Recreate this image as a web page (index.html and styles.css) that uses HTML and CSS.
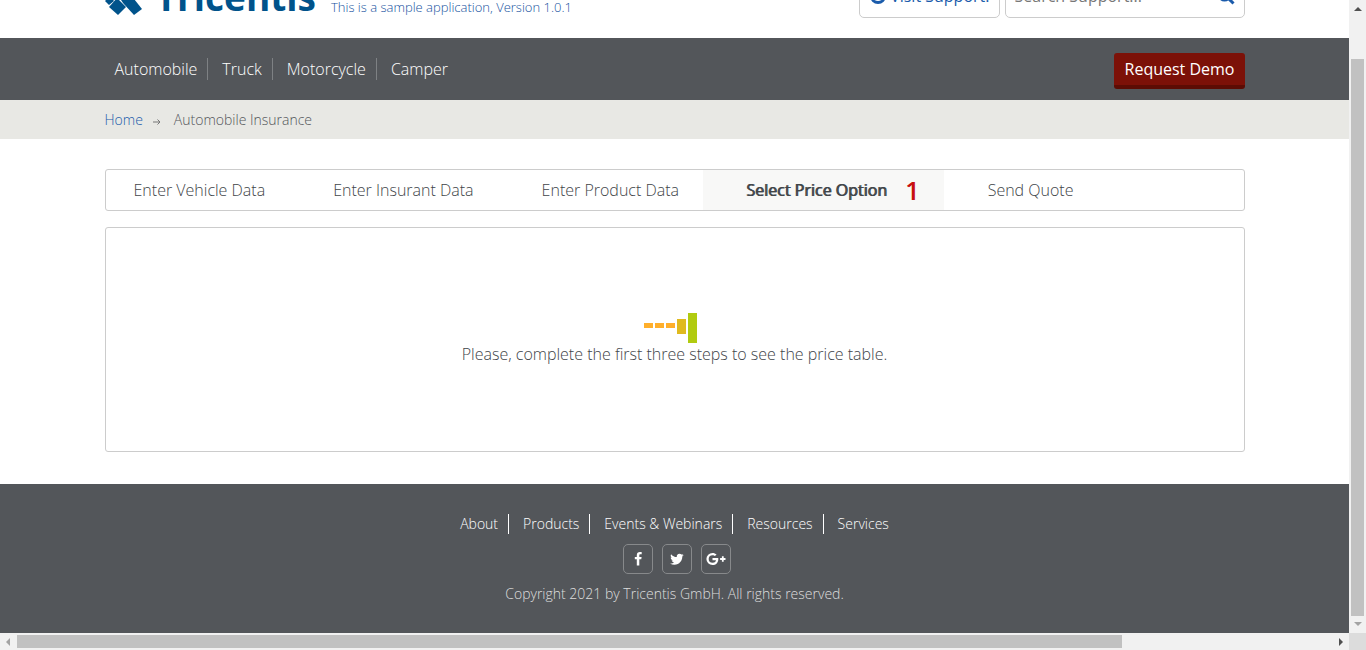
FILE: index.html
```html
<!DOCTYPE html>
<html lang="en">
<head>
<meta charset="utf-8">
<title>Automobile Insurance</title>
<link rel="stylesheet" href="styles.css">
</head>
<body>
<div class="shell">
  <div class="page">
    <header class="header">
      <div class="container header-row">
        <a class="logo" href="#">
          <svg class="logo-mark" viewBox="0 0 37 40" aria-hidden="true">
            <path d="M2 3 10 0 37 34 29 40 18 28Z"/>
            <path d="M29 3 37 9 27 20 19 14Z"/>
            <path d="M13 40 4 32 12 23 21 32Z"/>
            <path d="M0 26 5 21 9 26 4 30Z"/>
          </svg>
          <span class="logo-name">Tricentis</span>
        </a>
        <span class="tagline">This is a sample application, Version 1.0.1</span>
        <div class="header-tools">
          <a class="support" href="#">
            <svg class="support-icon" viewBox="0 0 16 16" aria-hidden="true">
              <circle cx="8" cy="8" r="8"/>
              <circle class="cut" cx="8" cy="5" r="3"/>
              <path class="cut" d="M3 11Q8 8 13 11Q8 15 3 11Z"/>
            </svg>
            Visit Support!
          </a>
          <form class="search">
            <input class="search-input" type="text" aria-label="Search Support" placeholder="Search Support...">
            <button class="search-button" type="button" aria-label="Search">
              <svg viewBox="0 0 18 18" width="18" height="18" aria-hidden="true"><circle cx="7.500" cy="7.500" r="5.500"/><path d="m11.500 11.500 5 5"/></svg>
            </button>
          </form>
        </div>
      </div>
    </header>

    <div class="navbar">
      <div class="container navbar-row">
        <nav class="nav">
          <a href="#">Automobile</a><a href="#">Truck</a><a href="#">Motorcycle</a><a href="#">Camper</a>
        </nav>
        <button class="demo" type="button">Request Demo</button>
      </div>
    </div>

    <div class="crumbs">
      <div class="container crumbs-row">
        <a href="#">Home</a>
        <svg class="crumb-arrow" viewBox="0 0 8 6" aria-hidden="true"><path d="M0 3h7M4.500.5 7 3 4.500 5.500"/></svg>
        <span>Automobile Insurance</span>
      </div>
    </div>

    <main class="container main">
      <nav class="tabs">
        <a href="#">Enter Vehicle Data</a>
        <a href="#">Enter Insurant Data</a>
        <a href="#">Enter Product Data</a>
        <a class="active" href="#">Select Price Option <span class="count">1</span></a>
        <a href="#">Send Quote</a>
      </nav>
      <section class="panel">
        <div class="loader" aria-hidden="true">
          <span class="bar"></span><span class="bar"></span><span class="bar"></span><span class="bar medium"></span><span class="bar tall"></span>
        </div>
        <p class="message">Please, complete the first three steps to see the price table.</p>
      </section>
    </main>

    <footer class="footer">
      <nav class="footer-nav">
        <a href="#">About</a><a href="#">Products</a><a href="#">Events &amp; Webinars</a><a href="#">Resources</a><a href="#">Services</a>
      </nav>
      <div class="social">
        <a href="#" aria-label="Facebook"><svg width="14" height="14" viewBox="0 0 14 14"><path d="M10.700.2v2.100H9.500c-1 0-1.200.5-1.200 1.200v1.400h2.300l-.3 2.400h-2V13.500H5.800V7.300h-2V4.900h2V3.200C5.800 1.200 7 .1 8.900.1c.8 0 1.600.1 1.800.1z"/></svg></a>
        <a href="#" aria-label="Twitter"><svg width="14" height="14" viewBox="0 0 14 14"><path d="M13.700 3c-.4.500-.8 1-1.400 1.400v.4c0 3.700-2.800 7.900-7.900 7.900-1.600 0-3.100-.4-4.300-1.200 1.500.2 3-.3 4.100-1.200-1.200 0-2.200-.8-2.600-1.900.4.100.8.100 1.300-.1C1.600 8 .7 6.900.7 5.500c.4.300.8.400 1.200.4C.7 5.100.3 3.500 1.100 2.200c1.400 1.700 3.400 2.800 5.700 2.900C6.400 3.300 7.800 1.700 9.500 1.700c.8 0 1.500.3 2 .9.600-.1 1.200-.4 1.800-.7-.2.600-.6 1.200-1.200 1.500.6-.1 1.100-.2 1.600-.4z"/></svg></a>
        <a href="#" aria-label="Google Plus"><svg width="20" height="14" viewBox="0 0 20 14"><path d="M12.300 7.200c0 3.400-2.300 5.900-5.800 5.900A6.100 6.100 0 0 1 6.500.9c1.600 0 3 .6 4.100 1.600L8.900 4.100C8.400 3.700 7.700 3.200 6.500 3.200a3.800 3.800 0 0 0 0 7.600c2.500 0 3.300-1.700 3.500-2.600H6.500V6.100h5.700c.1.300.1.700.1 1.100zM19.500 6.100v1.800h-1.800v1.800h-1.800V7.900h-1.800V6.100h1.800V4.300h1.800v1.800z"/></svg></a>
      </div>
      <p class="copyright">Copyright 2021 by Tricentis GmbH. All rights reserved.</p>
    </footer>
  </div>

  <div class="vscroll" aria-hidden="true">
    <svg class="arrow dark" viewBox="0 0 8 4"><path d="M4 0 8 4H0Z"/></svg>
    <span class="vtrack"><span class="vthumb"></span></span>
    <svg class="arrow" viewBox="0 0 8 4"><path d="M0 0H8L4 4Z"/></svg>
  </div>
  <div class="hscroll" aria-hidden="true">
    <svg class="arrow side" viewBox="0 0 4 8"><path d="M4 0V8L0 4Z"/></svg>
    <span class="htrack"><span class="hthumb"></span></span>
    <svg class="arrow side dark" viewBox="0 0 4 8"><path d="M0 0 4 4 0 8Z"/></svg>
  </div>
  <div class="corner" aria-hidden="true"></div>
</div>
</body>
</html>
```
FILE: styles.css
```css
* { box-sizing: border-box; }
body {
  margin: 0;
  font-family: "Open Sans", sans-serif;
  font-size: 16px;
  font-weight: 300;
  line-height: 22px;
  color: #414549;
}
a { color: inherit; text-decoration: none; }
p { margin: 0; }
button, input { font: inherit; }

.shell {
  display: grid;
  grid-template-columns: minmax(0, 1fr) 17px;
  grid-template-rows: minmax(0, 1fr) 17px;
  height: 100vh;
}
.page { display: flex; flex-direction: column; overflow: hidden; background: #fff; }
.container { width: 100%; max-width: 1140px; margin: 0 auto; }

/* Header, scrolled partly out of view */
.header { display: flex; align-items: flex-end; flex: none; height: 38px; overflow: hidden; }
.header-row { display: flex; align-items: flex-end; padding-bottom: 20px; }
.logo { display: flex; align-items: flex-end; color: #00538b; }
.logo-mark { width: 37px; height: 40px; margin-bottom: 3px; fill: currentColor; }
.logo-name { margin-left: 14px; font-size: 37px; font-weight: 700; line-height: 52px; margin-bottom: -5px; }
.tagline { margin: 0 auto 1px 15px; font-size: 13px; line-height: 20px; color: #1652a0; }
.header-tools { display: flex; gap: 5px; font-weight: 400; }
.support, .search { display: flex; align-items: center; height: 42px; padding: 0 9px 2px; border: 1px solid #ccc; border-radius: 5px; }
.support { gap: 4px; padding-left: 10px; color: #1a5bab; }
.support-icon { width: 16px; height: 16px; fill: #1a5bab; }
.support-icon .cut { fill: #fff; }
.search { width: 240px; }
.search-input { flex: 1; min-width: 0; padding: 0; border: 0; outline: 0; color: #777; }
.search-input::placeholder { color: #777; opacity: 1; }
.search-button { display: flex; padding: 0; border: 0; background: none; }
.search-button svg { fill: none; stroke: #1a5bab; stroke-width: 3; }

.navbar { flex: none; background: #53565a; }
.navbar-row { display: flex; justify-content: space-between; align-items: center; height: 62px; }
.nav { display: flex; color: #fff; }
.nav a { padding: 0 10px 0 14px; border-right: 1px solid #7e8184; }
.nav a:first-child { padding-left: 10px; }
.nav a:last-child { border: 0; }
.demo {
  height: 36px;
  margin-top: 4px;
  padding: 0 10px 0 11px;
  border: 0;
  border-bottom: 4px solid #5c0c04;
  border-radius: 3px;
  background: #7c1108;
  font-weight: 400;
  color: #fff;
}

.crumbs { flex: none; background: #e8e8e4; }
.crumbs-row { display: flex; align-items: center; height: 39px; font-size: 14px; color: #53565a; }
.crumbs-row a { color: #1a5bab; }
.crumb-arrow { width: 8px; height: 6px; margin: 5px 13px 0 10px; fill: none; stroke: #777; }

.main { display: flex; flex-direction: column; gap: 16px; padding: 30px 0 32px; }
.tabs { display: flex; border: 1px solid #ccc; border-radius: 3px; line-height: 40px; }
.tabs a { padding: 0 24px 0 44px; white-space: nowrap; }
.tabs a:first-child { padding-left: 28px; }
.tabs .active { display: flex; padding-left: 43px; background: #f8f8f7; font-weight: 400; text-shadow: 1px 0 currentColor; }
.count { margin-left: 18px; font-size: 26px; color: #c81010; }

.panel {
  display: flex;
  flex-direction: column;
  align-items: center;
  padding: 85px 20px 86px;
  border: 1px solid #ccc;
  border-radius: 3px;
}
.loader { display: flex; align-items: center; gap: 2px; height: 30px; margin-right: 8px; }
.bar { width: 9px; height: 5px; margin-bottom: 6px; background: #ffaf2b; }
.bar.medium { height: 15px; margin-bottom: 4px; background: #e0ba1f; }
.bar.tall { height: 30px; margin: 0; background: #b1cb10; }

.footer {
  display: flex;
  flex-direction: column;
  align-items: center;
  flex: 1 0 auto;
  padding-top: 30px;
  background: #53565a;
  font-size: 14px;
  line-height: 20px;
}
.footer-nav { display: flex; margin-bottom: 10px; color: #fff; }
.footer-nav a { padding: 0 10px 0 14px; border-right: 1px solid #fff; }
.footer-nav a:first-child { padding-left: 0; }
.footer-nav a:last-child { padding-right: 0; border: 0; }
.social { display: flex; gap: 9px; margin: 0 0 10px 5px; }
.social a {
  display: flex;
  align-items: center;
  justify-content: center;
  width: 30px;
  height: 30px;
  border: 1px solid #87898b;
  border-radius: 5px;
}
.social svg { fill: #fff; }
.copyright { color: #dedede; }

/* Window scroll bars */
.vscroll, .hscroll { display: flex; align-items: center; background: #f1f1f1; }
.vscroll { flex-direction: column; padding: 7px 0; gap: 6px; }
.hscroll { padding: 0 6px; gap: 7px; }
.vtrack { display: flex; flex: 1; flex-direction: column; justify-content: flex-end; width: 13px; }
.vthumb { height: 93%; background: #c1c1c1; }
.htrack { flex: 1; height: 13px; }
.hthumb { display: block; width: 84%; height: 13px; background: #c1c1c1; }
.arrow { flex: none; width: 8px; height: 4px; fill: #a3a3a3; }
.arrow.side { width: 4px; height: 8px; }
.arrow.dark { fill: #505050; }
.corner { background: #dcdcdc; }
```
